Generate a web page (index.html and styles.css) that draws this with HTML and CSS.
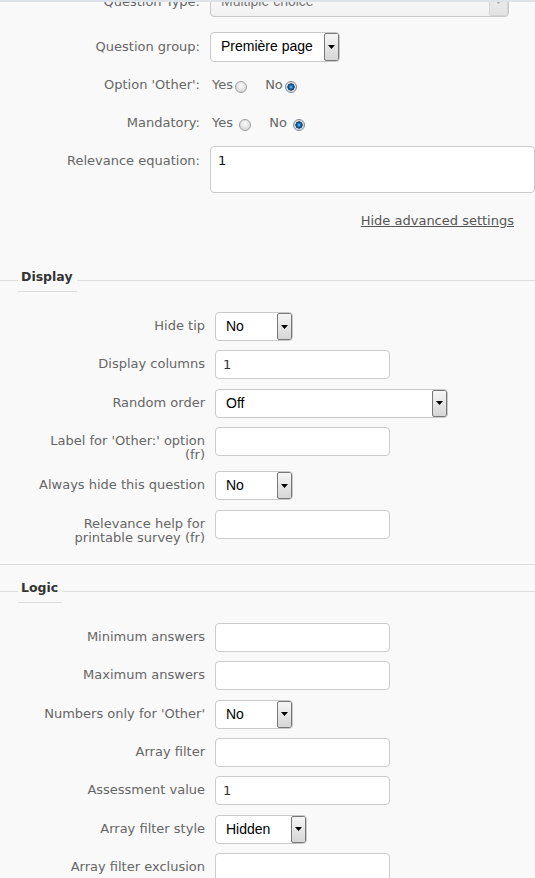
FILE: index.html
```html
<!DOCTYPE html>
<html lang="en">
<head>
    <meta charset="UTF-8">
    <title>Edit question</title>
    <link rel="stylesheet" href="styles.css">
</head>
<body>
<div class="panel">
    <div class="general">
        <div class="row row-type">
            <label class="row-label">Question Type:</label>
            <div class="select select-type is-disabled">
                <span class="select-text">Multiple choice</span>
                <span class="select-btn"><svg width="7" height="4" viewBox="0 0 7 4"><path d="M0 0h7L3.5 4z"/></svg></span>
            </div>
        </div>
        <div class="row">
            <label class="row-label">Question group:</label>
            <div class="select select-group">
                <span class="select-text">Première page</span>
                <span class="select-btn"><svg width="7" height="4" viewBox="0 0 7 4"><path d="M0 0h7L3.5 4z"/></svg></span>
            </div>
        </div>
        <div class="row">
            <label class="row-label">Option 'Other':</label>
            <div class="options">
                <label class="opt">Yes<input class="radio" type="radio" name="other"></label>
                <label class="opt">No<input class="radio" type="radio" name="other" checked></label>
            </div>
        </div>
        <div class="row">
            <label class="row-label">Mandatory:</label>
            <div class="options">
                <label class="opt">Yes <input class="radio" type="radio" name="mandatory"></label>
                <label class="opt">No <input class="radio" type="radio" name="mandatory" checked></label>
            </div>
        </div>
        <div class="row">
            <label class="row-label">Relevance equation:</label>
            <textarea class="equation">1</textarea>
        </div>
        <div class="advanced"><a href="#">Hide advanced settings</a></div>
    </div>

    <fieldset class="group group-display">
        <legend>Display</legend>
        <div class="field">
            <label class="field-label">Hide tip</label>
            <div class="select select-small">
                <span class="select-text">No</span>
                <span class="select-btn"><svg width="7" height="4" viewBox="0 0 7 4"><path d="M0 0h7L3.5 4z"/></svg></span>
            </div>
        </div>
        <div class="field">
            <label class="field-label">Display columns</label>
            <input class="text" type="text" value="1">
        </div>
        <div class="field">
            <label class="field-label">Random order</label>
            <div class="select select-wide">
                <span class="select-text">Off</span>
                <span class="select-btn"><svg width="7" height="4" viewBox="0 0 7 4"><path d="M0 0h7L3.5 4z"/></svg></span>
            </div>
        </div>
        <div class="field">
            <label class="field-label">Label for 'Other:' option (fr)</label>
            <input class="text" type="text">
        </div>
        <div class="field">
            <label class="field-label">Always hide this question</label>
            <div class="select select-small">
                <span class="select-text">No</span>
                <span class="select-btn"><svg width="7" height="4" viewBox="0 0 7 4"><path d="M0 0h7L3.5 4z"/></svg></span>
            </div>
        </div>
        <div class="field">
            <label class="field-label">Relevance help for printable survey (fr)</label>
            <input class="text" type="text">
        </div>
    </fieldset>

    <fieldset class="group group-logic">
        <legend>Logic</legend>
        <div class="field">
            <label class="field-label">Minimum answers</label>
            <input class="text" type="text">
        </div>
        <div class="field">
            <label class="field-label">Maximum answers</label>
            <input class="text" type="text">
        </div>
        <div class="field">
            <label class="field-label">Numbers only for 'Other'</label>
            <div class="select select-small">
                <span class="select-text">No</span>
                <span class="select-btn"><svg width="7" height="4" viewBox="0 0 7 4"><path d="M0 0h7L3.5 4z"/></svg></span>
            </div>
        </div>
        <div class="field">
            <label class="field-label">Array filter</label>
            <input class="text" type="text">
        </div>
        <div class="field">
            <label class="field-label">Assessment value</label>
            <input class="text" type="text" value="1">
        </div>
        <div class="field">
            <label class="field-label">Array filter style</label>
            <div class="select select-style">
                <span class="select-text">Hidden</span>
                <span class="select-btn"><svg width="7" height="4" viewBox="0 0 7 4"><path d="M0 0h7L3.5 4z"/></svg></span>
            </div>
        </div>
        <div class="field">
            <label class="field-label">Array filter exclusion</label>
            <input class="text" type="text">
        </div>
    </fieldset>
</div>
</body>
</html>
```

FILE: styles.css
```css
html, body {
    margin: 0;
    overflow: hidden;
}
body {
    background-color: #f9f9f9;
    font-family: "DejaVu Sans", Verdana, sans-serif;
    font-size: 13px;
    color: #666;
}
.panel {
    border-top: 2px solid #dde3e8;
    overflow: hidden;
}

/* general settings */
.general {
    margin-top: -15px;
}
.row {
    display: flex;
    align-items: flex-start;
    min-height: 30px;
    margin-bottom: 8px;
}
.row-type {
    margin-bottom: 15px;
}
.row-label {
    flex: none;
    width: 200px;
    margin-right: 10px;
    padding-top: 7px;
    line-height: 15px;
    text-align: right;
}
.options {
    padding: 7px 0 0 2px;
    line-height: 15px;
}
.opt {
    margin-right: 14px;
}
.radio {
    -webkit-appearance: none;
    appearance: none;
    box-sizing: border-box;
    width: 12px;
    height: 12px;
    margin: 0 0 0 2px;
    vertical-align: -4px;
    border: 1px solid #9c9c9c;
    border-radius: 50%;
    background: radial-gradient(circle at 50% 35%, #fafafa, #cfcfcf);
}
.radio:checked {
    border-color: #7d8894;
    background: radial-gradient(circle, #7fcaf5 0, #2a7cc0 1.4px, #0d4278 3px, #153a60 3.4px, #e3e8ed 3.9px, #c2cad2 100%);
}
.equation {
    box-sizing: border-box;
    width: 340px;
    height: 47px;
    margin: 0;
    padding: 6px 7px;
    border: 1px solid #ccc;
    border-radius: 4px;
    background: #fff;
    font-family: "DejaVu Sans", Verdana, sans-serif;
    font-size: 13px;
    color: #111;
    resize: none;
}
.advanced {
    padding: 12px 21px 0 0;
    line-height: 15px;
    text-align: right;
}
.advanced a {
    color: #555;
}

/* selects, drawn with a classic arrow button */
.select {
    box-sizing: border-box;
    display: flex;
    align-items: stretch;
    height: 29px;
    border: 1px solid #c9c9c9;
    border-radius: 4px;
    background: #fff;
    font-family: "Liberation Sans", Arial, sans-serif;
    font-size: 14px;
    color: #000;
    overflow: hidden;
}
.select-text {
    flex: 1;
    padding-left: 10px;
    line-height: 27px;
    white-space: nowrap;
}
.select-btn {
    flex: none;
    display: flex;
    align-items: center;
    justify-content: center;
    box-sizing: border-box;
    width: 15px;
    border: 1px solid #777;
    border-radius: 2px;
    background: linear-gradient(#f6f6f6, #d6d6d6);
}
.select-type {
    width: 299px;
    height: 30px;
}
.select-group {
    width: 130px;
    height: 30px;
}
.select-small {
    width: 78px;
}
.select-wide {
    width: 233px;
}
.select-style {
    width: 92px;
}
.is-disabled {
    background: linear-gradient(#fdfdfd, #f1f1f1);
    color: #777;
}
.is-disabled .select-btn {
    width: 19px;
    border-color: #d4d4d4;
    background: linear-gradient(#f1f1f1, #e2e2e2);
}
.is-disabled .select-btn svg {
    fill: #aaa;
}

/* fieldsets */
.group {
    margin: 0;
    padding: 20px 0 10px;
    border: 0;
    border-top: 1px solid #ddd;
    border-bottom: 1px solid #ddd;
}
.group-display {
    margin-top: 41px;
}
.group-logic {
    margin-top: 15px;
    border-bottom: 0;
}
.group legend {
    margin-left: 18px;
    padding: 0 4px 6px 3px;
    border-bottom: 1px solid #ddd;
    font-size: 12.5px;
    font-weight: bold;
    line-height: 16px;
    color: #333;
}
.field {
    display: flex;
    align-items: flex-start;
    margin-bottom: 9.33px;
}
.field-label {
    flex: none;
    box-sizing: border-box;
    width: 205px;
    padding: 7px 0 0 30px;
    margin-right: 10px;
    line-height: 14px;
    text-align: right;
}
.field-label-2 {
    line-height: 13.5px;
}
.text {
    box-sizing: border-box;
    width: 175px;
    height: 29px;
    margin: 0;
    padding: 0 7px;
    border: 1px solid #ccc;
    border-radius: 4px;
    background: #fff;
    font-family: "DejaVu Sans", Verdana, sans-serif;
    font-size: 13px;
    color: #333;
}
```
